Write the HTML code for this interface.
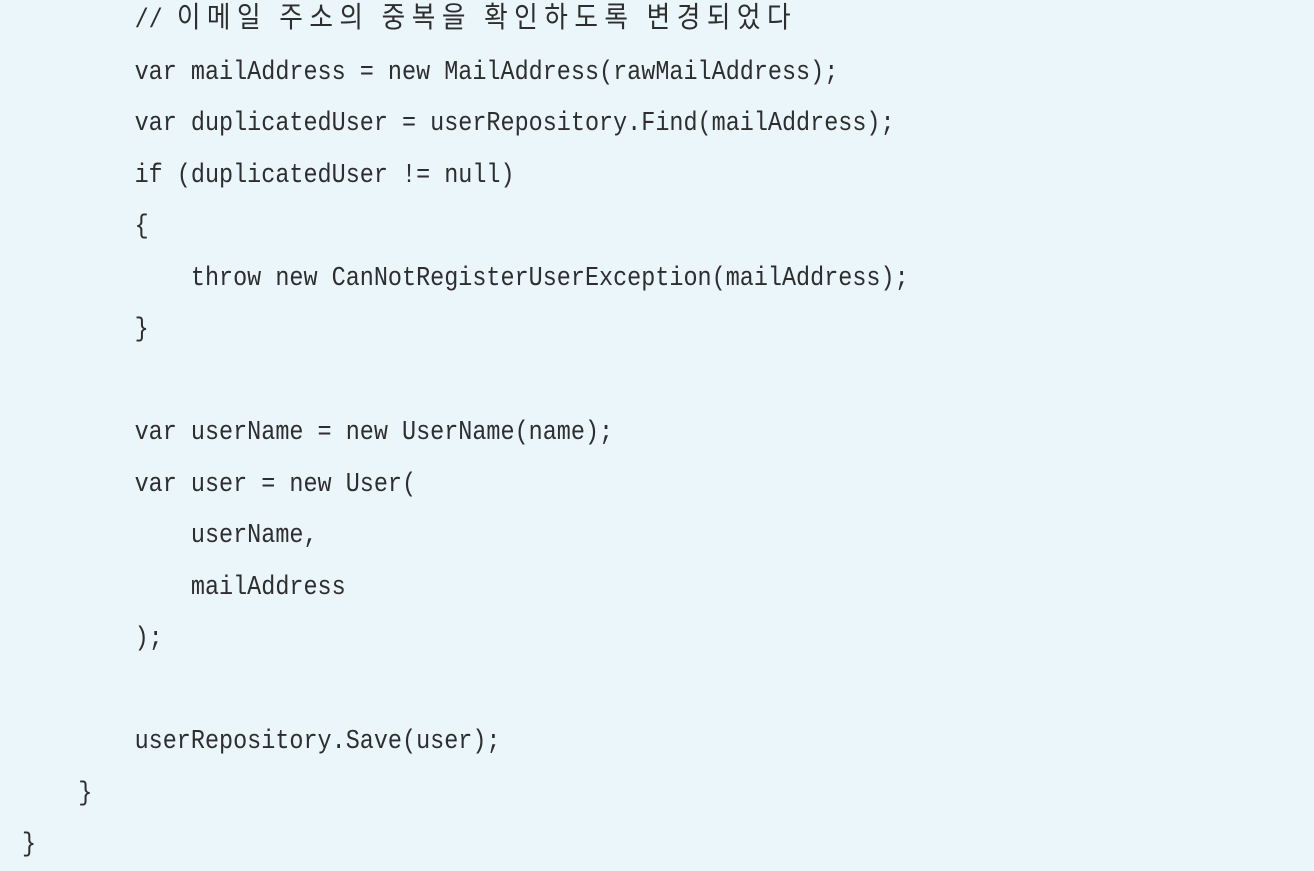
<!DOCTYPE html>
<html><head><meta charset="utf-8"><style>
html,body{margin:0;padding:0;width:1314px;height:870px;overflow:hidden;background:#eaf6fa;}
pre{position:absolute;left:22px;top:-10px;margin:0;font-family:"Liberation Mono","Noto Sans CJK KR",monospace;font-size:26.5px;line-height:51.5px;color:#2e2e2e;transform:scaleX(0.885);transform-origin:0 0;}
.k{font-family:"Noto Sans CJK KR",sans-serif;letter-spacing:7.3px;font-size:29px;}
</style></head><body>
<pre>        // <span class="k">이메일 주소의 중복을 확인하도록 변경되었다</span>
        var mailAddress = new MailAddress(rawMailAddress);
        var duplicatedUser = userRepository.Find(mailAddress);
        if (duplicatedUser != null)
        {
            throw new CanNotRegisterUserException(mailAddress);
        }

        var userName = new UserName(name);
        var user = new User(
            userName,
            mailAddress
        );

        userRepository.Save(user);
    }
}</pre>
</body></html>
